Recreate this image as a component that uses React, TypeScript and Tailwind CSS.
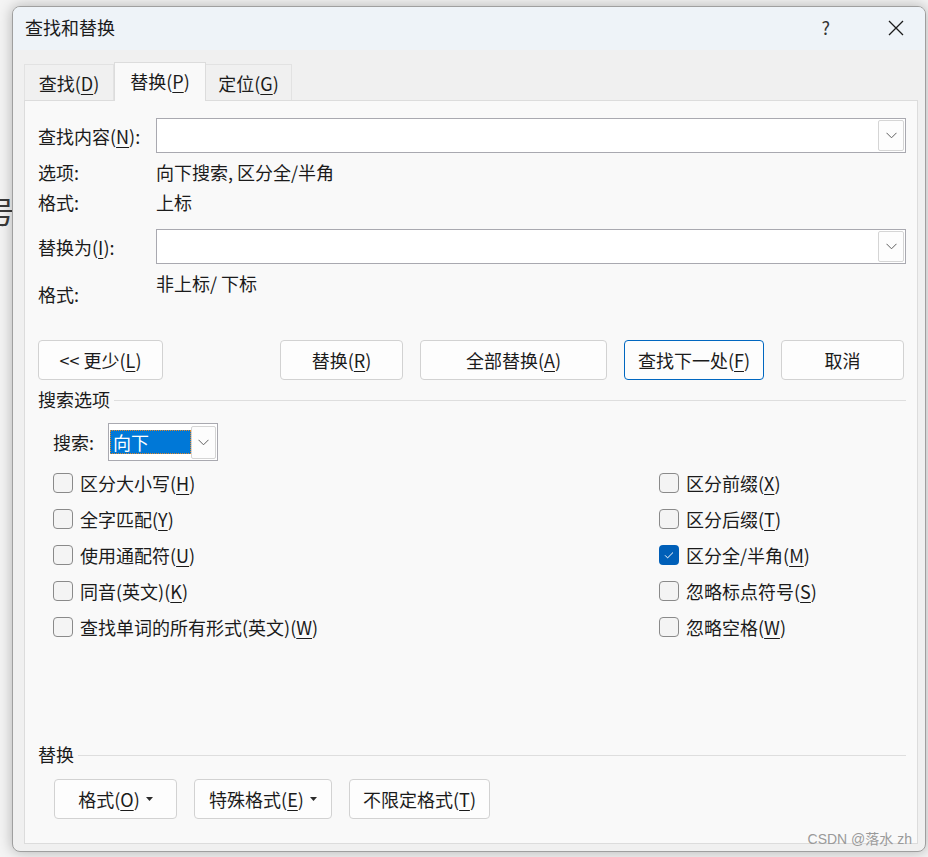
import React from 'react'

const ui = "font-['Noto_Sans_CJK_SC','Microsoft_YaHei',sans-serif]"

function K({ k }: { k: string }) {
  return <span className="underline decoration-1 underline-offset-[3px]">{k}</span>
}

function Chevron() {
  return (
    <svg width="11" height="7" viewBox="0 0 11 7" fill="none">
      <path d="M0.5 0.8l5 5 5-5" stroke="#5f5f5f" strokeWidth="1" />
    </svg>
  )
}

function Caret() {
  return (
    <svg width="7" height="4" viewBox="0 0 7 4" className="ml-[6px]">
      <path d="M0 0h7l-3.5 4z" fill="#2b2b2b" />
    </svg>
  )
}

function ComboInput() {
  return (
    <div className="flex h-[35px] w-[750px] items-center justify-end border border-[#a9a9b0] bg-white pr-px">
      <div className="flex h-[31px] w-[26px] items-center justify-center rounded-[2px] border border-[#d5d5d5] bg-[#fdfdfd]">
        <Chevron />
      </div>
    </div>
  )
}

function Btn({ w, children, focus }: { w: string; children: React.ReactNode; focus?: boolean }) {
  return (
    <button
      className={
        'flex h-[40px] items-center justify-center rounded-[4px] border bg-[#fdfdfd] text-[18px] leading-[24px] text-[#1b1b1b] ' +
        w +
        (focus ? ' border-[#0067c0]' : ' border-[#d2d2d2]')
      }
    >
      {children}
    </button>
  )
}

function Check({ checked, children }: { checked?: boolean; children: React.ReactNode }) {
  return (
    <div className="flex h-[36px] items-center">
      {checked ? (
        <div className="flex h-[20px] w-[20px] items-center justify-center rounded-[4px] bg-[#005fb8]">
          <svg width="20" height="20" viewBox="0 0 20 20" fill="none">
            <path d="M6 10.3l2.6 2.6 5.4-5.4" stroke="white" strokeWidth="1" />
          </svg>
        </div>
      ) : (
        <div className="h-[20px] w-[20px] rounded-[4px] border border-[#8a8a8a] bg-[#f4f4f4]" />
      )}
      <span className="ml-[7px] text-[18px] leading-[24px] text-[#1b1b1b]">{children}</span>
    </div>
  )
}

export default function App() {
  return (
    <div className={'relative h-[857px] w-[928px] overflow-hidden bg-[#f4f4f4] ' + ui}>
      <div className="absolute left-[-15px] top-[190px] text-[30px] leading-[40px] text-[#3a3a3a]">号</div>

      <div className="pl-[12px] pt-[6px]">
        <div className="relative h-[846px] w-[914px] overflow-hidden rounded-[8px] border border-[#9f9f9f] bg-[#f0f0f0] shadow-[0_0_14px_rgba(0,0,0,0.28)]">
          {/* title bar */}
          <div className="flex h-[43px] items-center bg-[#eef3f8] pb-[2px] pl-[12px] text-[18px] text-[#1b1b1b]">
            <span>查找和替换</span>
            <span className="ml-auto mr-[58px] text-[18px] text-[#333]">?</span>
            <svg width="16" height="16" viewBox="0 0 16 16" className="mr-[21px]">
              <path d="M1 1L15 15M15 1L1 15" stroke="#1b1b1b" strokeWidth="1.3" />
            </svg>
          </div>

          {/* tabs */}
          <div className="ml-[11px] mt-[12px] flex items-end text-[18px] leading-[24px] text-[#1b1b1b]">
            <div className="flex h-[36px] w-[90px] items-center justify-center border border-b-0 border-[#e2e2e2] bg-[#f0f0f0]">
              查找(<K k="D" />)
            </div>
            <div className="relative z-10 -mb-px flex h-[39px] w-[92px] items-center justify-center border border-b-0 border-[#dcdcdc] bg-[#f9f9f9] pb-[2px]">
              替换(<K k="P" />)
            </div>
            <div className="flex h-[36px] w-[86px] items-center justify-center border border-b-0 border-l-0 border-[#e2e2e2] bg-[#f0f0f0]">
              定位(<K k="G" />)
            </div>
          </div>

          {/* panel */}
          <div className="ml-[11px] h-[744px] w-[894px] border border-[#dcdcdc] bg-[#f9f9f9] pl-[13px] pr-[11px] text-[18px] leading-[24px] text-[#1b1b1b]">
            <div className="mt-[17px] flex items-center">
              <span className="w-[118px]">
                查找内容(<K k="N" />):
              </span>
              <ComboInput />
            </div>
            <div className="mt-[7px] flex h-[24px]">
              <span className="w-[118px]">选项:</span>
              <span>向下搜索, 区分全/半角</span>
            </div>
            <div className="mt-[6px] flex h-[24px]">
              <span className="w-[118px]">格式:</span>
              <span>上标</span>
            </div>
            <div className="mt-[15px] flex items-center">
              <span className="w-[118px]">
                替换为(<K k="I" />):
              </span>
              <ComboInput />
            </div>
            <div className="mt-[7px] flex h-[35px]">
              <span className="w-[118px] self-end">格式:</span>
              <span className="self-start">非上标/ 下标</span>
            </div>

            {/* action buttons */}
            <div className="mt-[34px] flex w-[866px] items-center">
              <Btn w="w-[125px]">
                {'<< 更少('}
                <K k="L" />)
              </Btn>
              <div className="flex-1" />
              <div className="flex gap-[17px]">
                <Btn w="w-[123px]">
                  替换(<K k="R" />)
                </Btn>
                <Btn w="w-[187px]">
                  全部替换(<K k="A" />)
                </Btn>
                <Btn w="w-[140px]" focus>
                  查找下一处(<K k="F" />)
                </Btn>
                <Btn w="w-[123px]">取消</Btn>
              </div>
            </div>

            {/* search options */}
            <div className="mt-[7px] flex h-[24px] w-[868px] items-center">
              <span>搜索选项</span>
              <div className="ml-[4px] mt-[2px] h-px flex-1 bg-[#dedede]" />
            </div>

            <div className="mt-[12px] flex items-center pl-[15px]">
              <span className="w-[55px]">搜索:</span>
              <div className="flex h-[38px] w-[110px] items-center border border-[#a9a9b0] bg-white pl-px">
                <div className="flex h-[24px] w-[81px] items-center border border-dotted border-[#e0872a] bg-[#0078d7] pl-[2px] text-white">
                  向下
                </div>
                <div className="flex h-[33px] w-[25px] items-center justify-center rounded-[2px] border border-[#d5d5d5] bg-[#fdfdfd]">
                  <Chevron />
                </div>
              </div>
            </div>

            <div className="mt-[4px] grid grid-cols-[606px_auto] pl-[15px]">
              <div>
                <Check>
                  区分大小写(<K k="H" />)
                </Check>
                <Check>
                  全字匹配(<K k="Y" />)
                </Check>
                <Check>
                  使用通配符(<K k="U" />)
                </Check>
                <Check>
                  同音(英文)(<K k="K" />)
                </Check>
                <Check>
                  查找单词的所有形式(英文)(<K k="W" />)
                </Check>
              </div>
              <div>
                <Check>
                  区分前缀(<K k="X" />)
                </Check>
                <Check>
                  区分后缀(<K k="T" />)
                </Check>
                <Check checked>
                  区分全/半角(<K k="M" />)
                </Check>
                <Check>
                  忽略标点符号(<K k="S" />)
                </Check>
                <Check>
                  忽略空格(<K k="W" />)
                </Check>
              </div>
            </div>

            {/* replace section */}
            <div className="mt-[97px] flex h-[24px] w-[868px] items-center">
              <span>替换</span>
              <div className="ml-[4px] mt-[2px] h-px flex-1 bg-[#dedede]" />
            </div>
            <div className="mt-[13px] flex items-center gap-[17px] pl-[16px]">
              <Btn w="w-[123px]">
                格式(<K k="O" />)
                <Caret />
              </Btn>
              <Btn w="w-[138px]">
                特殊格式(<K k="E" />)
                <Caret />
              </Btn>
              <Btn w="w-[141px]">
                不限定格式(<K k="T" />)
              </Btn>
            </div>
          </div>
        </div>
      </div>

      <div className="absolute bottom-[10px] right-[16px] font-['Liberation_Sans','Noto_Sans_CJK_SC',sans-serif] text-[14px] leading-[16px] text-[#9a9a9a]">
        CSDN @落水 zh
      </div>
    </div>
  )
}
